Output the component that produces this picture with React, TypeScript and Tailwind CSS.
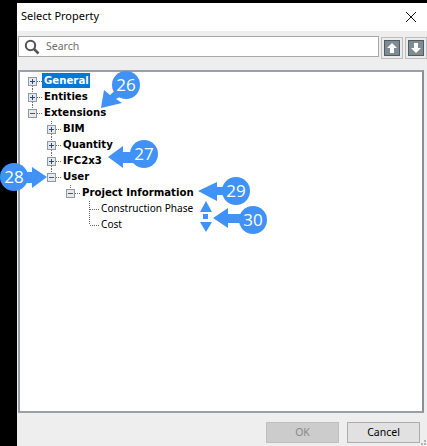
const rows = [
  { label: 'General', level: 0, kind: 'plus', up: false, down: true, bold: true, sel: true },
  { label: 'Entities', level: 0, kind: 'plus', up: true, down: true, bold: true },
  { label: 'Extensions', level: 0, kind: 'minus', up: true, down: false, bold: true },
  { label: 'BIM', level: 1, kind: 'plus', up: true, down: true, bold: true },
  { label: 'Quantity', level: 1, kind: 'plus', up: true, down: true, bold: true },
  { label: 'IFC2x3', level: 1, kind: 'plus', up: true, down: true, bold: true },
  { label: 'User', level: 1, kind: 'minus', up: true, down: false, bold: true },
  { label: 'Project Information', level: 2, kind: 'minus', up: true, down: false, bold: true },
  { label: 'Construction Phase', level: 3, kind: 'leaf', up: true, down: true, bold: false },
  { label: 'Cost', level: 3, kind: 'leaf', up: true, down: false, bold: false },
];

function Cell({ kind, up, down }: { kind: string; up: boolean; down: boolean }) {
  const dots = { stroke: '#6b6b6b', strokeWidth: 1, strokeDasharray: '1 1', fill: 'none' };
  return (
    <svg width="19" height="16" className="shrink-0">
      {kind === 'leaf' ? (
        <>
          {up && <line x1="7.5" y1="0" x2="7.5" y2="8" {...dots} />}
          {down && <line x1="7.5" y1="8" x2="7.5" y2="16" {...dots} />}
          <line x1="8" y1="8.5" x2="18" y2="8.5" {...dots} />
        </>
      ) : (
        <>
          {up && <line x1="7.5" y1="0" x2="7.5" y2="4" {...dots} />}
          {down && <line x1="7.5" y1="13" x2="7.5" y2="16" {...dots} />}
          <line x1="12" y1="8.5" x2="17" y2="8.5" {...dots} />
          <rect x="3.5" y="4.5" width="8" height="8" fill="#e6e8ec" stroke="#8d99a6" />
          <line x1="5" y1="8.5" x2="10" y2="8.5" stroke={kind === 'plus' ? '#2a4a80' : '#555'} />
          {kind === 'plus' && <line x1="7.5" y1="6" x2="7.5" y2="11" stroke="#2a4a80" />}
        </>
      )}
    </svg>
  );
}

function SortBtn({ dir }: { dir: 'up' | 'down' }) {
  return (
    <div className="w-[22px] h-[22px] border border-[#bdbdbd] bg-[#ececec] flex items-center justify-center">
      <svg width="16" height="16">
        <rect x="0.5" y="0.5" width="15" height="15" fill="#7f8b93" stroke="#4f5a63" />
        <path d={dir === 'up' ? 'M8 3 L13 8 H10 V13 H6 V8 H3 Z' : 'M8 13 L13 8 H10 V3 H6 V8 H3 Z'} fill="#fff" />
      </svg>
    </div>
  );
}

const BLUE = '#4192f6';

function Overlay() {
  const num = { fill: '#fff', fontSize: 17, textAnchor: 'middle' as const, fontFamily: '"Open Sans", sans-serif' };
  return (
    <svg width="427" height="446" className="absolute left-0 top-0 pointer-events-none">
      <g fill={BLUE}>
        <circle cx="126" cy="85" r="14" />
        <path d="M101 108 L104 90 L110 95 L120 86 L127 93 L116 99 L122 103 Z" />
        <circle cx="144" cy="154" r="14" />
        <path d="M108 157 L123 146 V152 H134 V163 H123 V168 Z" />
        <circle cx="14" cy="177" r="14" />
        <path d="M47 177 L32 167 V172 H22 V183 H32 V188 Z" />
        <circle cx="236" cy="191" r="14" />
        <path d="M198 191 L217 182 V187 H226 V195 H217 V201 Z" />
        <circle cx="253" cy="220" r="14" />
        <path d="M213 218 L228 208 V214 H243 V223 H228 V228 Z" />
        <path d="M206 201 L212 212 H200 Z" />
        <rect x="203" y="214" width="5" height="5" />
        <path d="M206 232 L212 222 H200 Z" />
      </g>
      <g fill="#b5b5b5">
        <rect x="424" y="440" width="2" height="2" />
        <rect x="421" y="443" width="2" height="2" />
        <rect x="424" y="443" width="2" height="2" />
      </g>
      <text x="126" y="91" {...num}>26</text>
      <text x="144" y="160" {...num}>27</text>
      <text x="14" y="183" {...num}>28</text>
      <text x="236" y="197" {...num}>29</text>
      <text x="253" y="226" {...num}>30</text>
    </svg>
  );
}

export default function App() {
  return (
    <div className="relative w-[427px] h-[446px] overflow-hidden bg-black pt-[3px] pl-[17px] font-['Noto_Sans',sans-serif] text-[10.500px] text-black">
      <div className="w-[410px] h-[443px] bg-[#eeeeee] flex flex-col">
        <div className="h-[28px] bg-white flex items-center justify-between pl-[4px] pr-[10px] pb-[1px] shrink-0 text-[11px]">
          <span>Select Property</span>
          <svg width="12" height="12" viewBox="0 0 12 12">
            <path d="M1 1 L11 11 M11 1 L1 11" stroke="#111" strokeWidth="1" />
          </svg>
        </div>
        <div className="flex items-start gap-[2px] pl-[1px] pt-[5px] shrink-0">
          <div className="w-[363px] h-[21px] bg-white border border-[#a8a8a8] flex items-center pl-[5px] gap-[6px] text-[#6d6d6d]">
            <svg width="16" height="16" viewBox="0 0 16 16">
              <circle cx="6.500" cy="6.500" r="4.700" fill="none" stroke="#555" strokeWidth="2" />
              <path d="M10 10 L14.500 14.500" stroke="#555" strokeWidth="2.500" />
            </svg>
            <span>Search</span>
          </div>
          <div className="mt-[1px] flex gap-[2px]">
            <SortBtn dir="up" />
            <SortBtn dir="down" />
          </div>
        </div>
        <div className="ml-[1px] mt-[11px] w-[406px] h-[343px] bg-white border-2 border-[#9a9fa8] border-r-[#8a8f98] pt-[1px] shrink-0">
          {rows.map((r) => (
            <div
              key={r.label}
              className="h-[16px] flex items-center leading-[16px]"
              style={{ paddingLeft: 5 + r.level * 19 }}
            >
              <Cell kind={r.kind} up={r.up} down={r.down} />
              <span
                className={
                  (r.bold
                    ? "font-['DejaVu_Sans'] font-bold font-stretch-condensed text-[11.300px] "
                    : 'text-[10.100px] -translate-y-px ') +
                  (r.sel ? 'bg-[#0078d7] text-white -ml-[2px] pl-[2px] pr-[1px] h-[15px] leading-[15px] -translate-y-px' : '')
                }
              >
                {r.label}
              </span>
            </div>
          ))}
        </div>
        <div className="flex justify-end gap-[8px] pr-[7px] pt-[9px] shrink-0">
          <div className="w-[73px] h-[21px] bg-[#cccccc] border border-[#bfbfbf] text-[#8a8a8a] flex items-center justify-center">OK</div>
          <div className="w-[73px] h-[21px] bg-[#e1e1e1] border border-[#adadad] flex items-center justify-center">Cancel</div>
        </div>
      </div>
      <Overlay />
    </div>
  );
}
